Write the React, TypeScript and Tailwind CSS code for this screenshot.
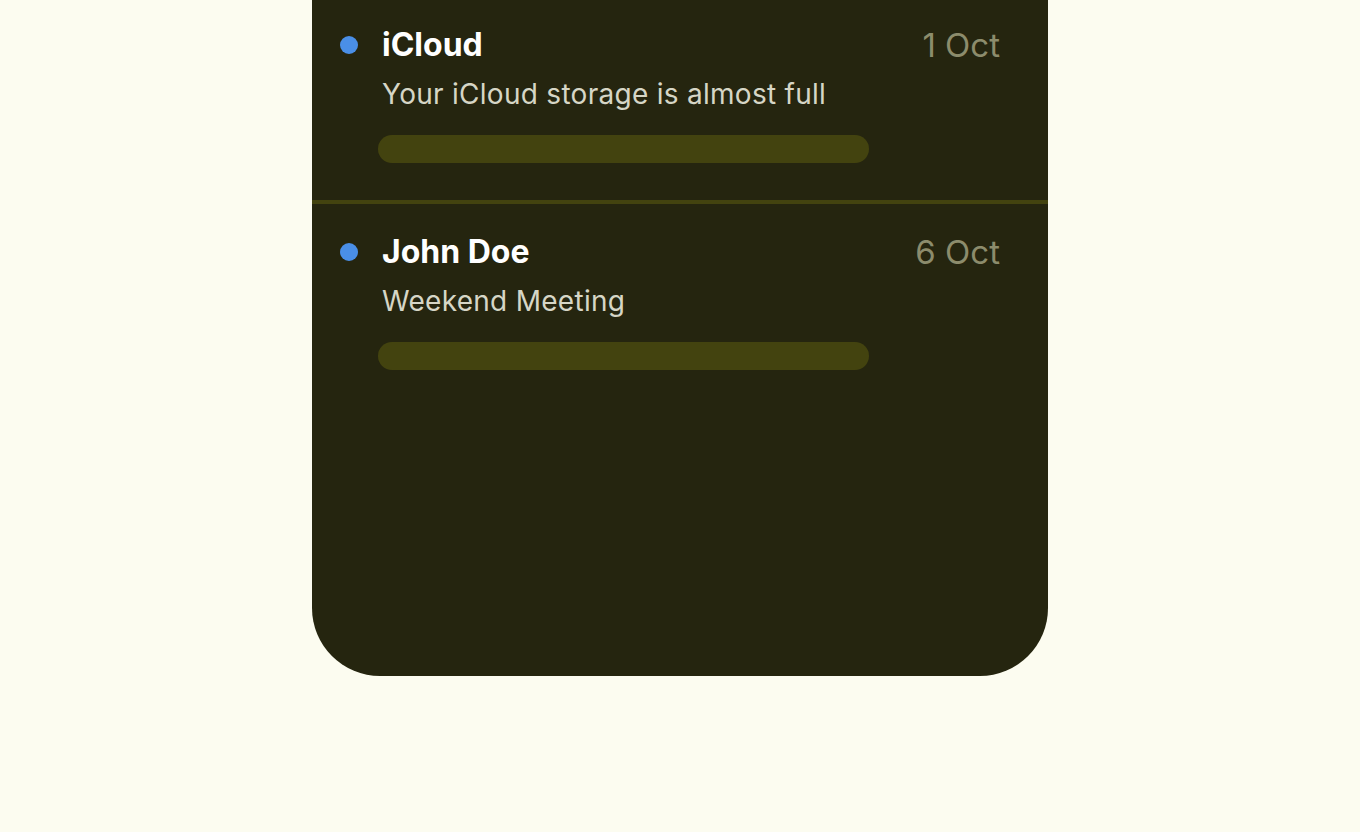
const messages = [
  {
    sender: "iCloud",
    subject: "Your iCloud storage is almost full",
    date: "1 Oct",
  },
  {
    sender: "John Doe",
    subject: "Weekend Meeting",
    date: "6 Oct",
  },
];

type Message = (typeof messages)[number];

const MessageRow = ({ message, first }: { message: Message; first: boolean }) => (
  <div className={`flex pl-7 pr-12 pb-[37px] ${first ? "pt-[27px]" : "pt-[30px]"}`}>
    {/* Unread dot */}
    <div className="flex h-9 w-[42px] shrink-0 items-center">
      <span className="h-[18px] w-[18px] rounded-full bg-[#4a8fe7]" />
    </div>

    <div className="flex min-w-0 flex-1 flex-col">
      <div className="flex h-9 items-center justify-between">
        <span className="text-[32px] font-bold leading-9 text-white">{message.sender}</span>
        <span className="text-[33px] leading-9 text-[#8c8c6c]">{message.date}</span>
      </div>
      <p className="mt-[15px] text-[28px] leading-8 tracking-[0.01em] text-[#d6d6c6]">
        {message.subject}
      </p>
      {/* Preview placeholder */}
      <div className="-ml-1 mt-[25px] h-7 w-[491px] rounded-full bg-[#43430f]" />
    </div>
  </div>
);

export default function App() {
  return (
    <div className="min-h-screen bg-[#fcfcf0] font-['Inter','Noto_Sans',sans-serif]">
      <div className="mx-auto h-[676px] w-[736px] overflow-hidden rounded-b-[68px] bg-[#25250f]">
        {messages.map((message, i) => (
          <div key={message.sender}>
            {i > 0 && <div className="h-1 bg-[#43430f]" />}
            <MessageRow message={message} first={i === 0} />
          </div>
        ))}
      </div>
    </div>
  );
}
